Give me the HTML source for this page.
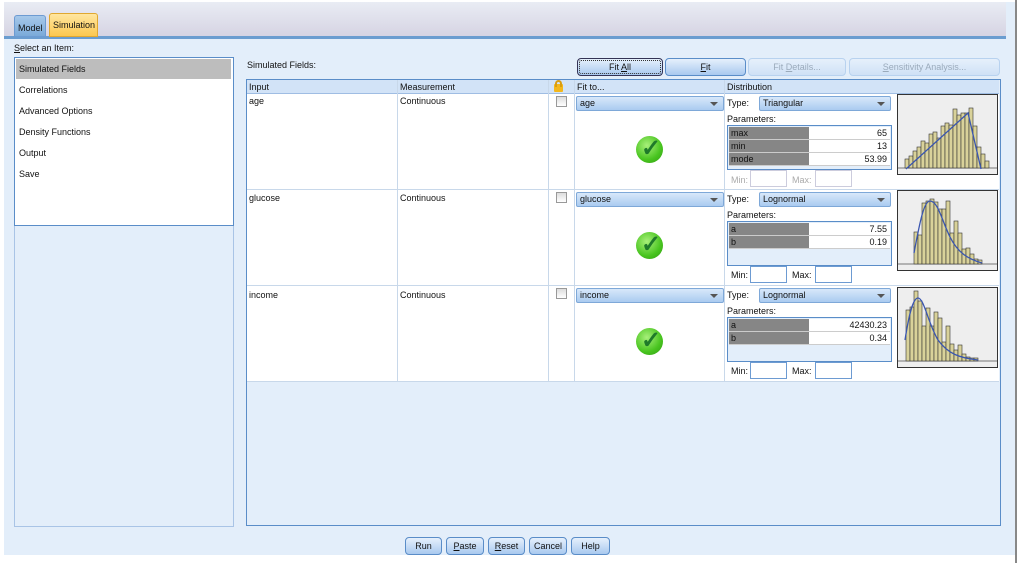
<!DOCTYPE html>
<html><head><meta charset="utf-8"><style>
*{box-sizing:border-box;margin:0;padding:0}
body{width:1023px;height:563px;background:#fff;position:relative;overflow:hidden;font-family:"Liberation Sans",sans-serif;font-size:9px;color:#111}
.a{position:absolute}
.t{position:absolute;white-space:nowrap;font-size:9px;line-height:11px}
.cb{position:absolute;width:148px;height:15px;border:1px solid #7ea8d8;border-radius:2px;background:linear-gradient(#d8e8fa,#aacbf0);font-size:9px;line-height:13px;padding-left:3px}
.cb:after{content:"";position:absolute;right:5px;top:5px;border:4px solid transparent;border-top:4px solid #555;border-bottom:0}
.btn{position:absolute;height:18px;border:1px solid #5a8dc8;border-radius:4px;background:linear-gradient(#e6f0fc,#a9c9ef);text-align:center;font-size:9px;line-height:16px}
.dis{border-color:#b8d2ef;background:linear-gradient(#e6f0fb,#cfe1f6);color:#9aaabb}
.chk{position:absolute;width:11px;height:11px;border:1px solid #999;background:linear-gradient(#ddd,#fff)}
.ok{position:absolute;width:27px;height:27px;border-radius:50%;background:radial-gradient(circle at 40% 35%,#a8f07a,#48c41f 60%,#2f9a12);}
.ok:after{content:"✓";position:absolute;left:5px;top:-2px;font-size:24px;color:#1f7a2a;font-weight:bold;line-height:30px}
.pb{position:absolute;width:165px;height:45px;border:1px solid #5a8dc8;background:#e3eefa}
.pr{position:absolute;left:1px;width:161px;height:13px;background:#fff;border-bottom:1px solid #ccc}
.pr b{position:absolute;left:0;top:0;width:80px;height:12px;background:#868686;font-weight:normal;padding-left:2px;line-height:12px;font-size:9px}
.pr i{position:absolute;right:3px;top:0;font-style:normal;line-height:12px}
.in{position:absolute;width:37px;height:17px;border:1px solid #6d9bd2;background:#fff}
.hist{position:absolute;width:101px;height:81px;border:1px solid #333;background:#eee}
</style></head><body>
<div class="a" style="left:4px;top:2px;width:1012px;height:553px;background:#e3eefa"></div>
<div class="a" style="left:4px;top:2px;width:1002px;height:34px;background:linear-gradient(#e9ecf4,#d6d4e3)"></div>
<div class="a" style="left:1015px;top:0;width:2px;height:563px;background:#888"></div>
<div class="a" style="left:4px;top:36px;width:1002px;height:3px;background:#6b9dd0"></div>
<div class="a" style="left:14px;top:15px;width:32px;height:22px;background:linear-gradient(#a6c8ea,#7aaad9);border:1px solid #6d9bd2;border-radius:3px 3px 0 0"></div>
<div class="t" style="left:18px;top:23px">Model</div>
<div class="a" style="left:49px;top:13px;width:49px;height:24px;background:linear-gradient(#ffe6a0,#fcc850);border:1px solid #e0a830;border-radius:3px 3px 0 0"></div>
<div class="t" style="left:53px;top:20px">Simulation</div>
<div class="t" style="left:14px;top:43px"><u>S</u>elect an Item:</div>
<div class="a" style="left:14px;top:57px;width:220px;height:470px;border:1px solid #a9c4e6"></div>
<div class="a" style="left:14px;top:57px;width:220px;height:169px;background:#fff;border:1px solid #5a8dc8"></div>
<div class="a" style="left:16px;top:59px;width:215px;height:20px;background:#bdbdbd"></div>
<div class="t" style="left:19px;top:64px">Simulated Fields</div>
<div class="t" style="left:19px;top:85px">Correlations</div>
<div class="t" style="left:19px;top:106px">Advanced Options</div>
<div class="t" style="left:19px;top:127px">Density Functions</div>
<div class="t" style="left:19px;top:148px">Output</div>
<div class="t" style="left:19px;top:169px">Save</div>

<div class="t" style="left:247px;top:60px">Simulated Fields:</div>
<div class="btn" style="left:577px;top:58px;width:86px;border-color:#335;outline:1px dotted #333;outline-offset:-3px">Fit <u>A</u>ll</div>
<div class="btn" style="left:665px;top:58px;width:81px"><u>F</u>it</div>
<div class="btn dis" style="left:748px;top:58px;width:98px">Fit <u>D</u>etails...</div>
<div class="btn dis" style="left:849px;top:58px;width:151px"><u>S</u>ensitivity Analysis...</div>

<div class="a" style="left:246px;top:79px;width:755px;height:447px;border:1px solid #5a8dc8;background:#e3eefa"></div>
<div class="a" style="left:247px;top:80px;width:752px;height:14px;background:#d2e3f7;border-bottom:1px solid #9fbde3"></div>
<div class="a" style="left:247px;top:94px;width:752px;height:288px;background:#fff"></div>
<div class="a" style="left:247px;top:189px;width:752px;height:1px;background:#c8d8ea"></div>
<div class="a" style="left:247px;top:285px;width:752px;height:1px;background:#c8d8ea"></div>
<div class="a" style="left:247px;top:381px;width:752px;height:1px;background:#c8d8ea"></div>
<div class="a" style="left:397px;top:80px;width:1px;height:302px;background:#c8d8ea"></div>
<div class="a" style="left:548px;top:80px;width:1px;height:302px;background:#c8d8ea"></div>
<div class="a" style="left:574px;top:80px;width:1px;height:302px;background:#c8d8ea"></div>
<div class="a" style="left:724px;top:80px;width:1px;height:302px;background:#c8d8ea"></div>
<div class="t" style="left:249px;top:82px">Input</div>
<div class="t" style="left:400px;top:82px">Measurement</div>
<div class="a" style="left:554px;top:84px;width:9px;height:8px;background:#f3b71c;border-radius:1px"></div>
<div class="a" style="left:555px;top:80px;width:7px;height:7px;border:2px solid #d99d10;border-bottom:0;border-radius:4px 4px 0 0"></div>
<div class="t" style="left:577px;top:82px">Fit to...</div>
<div class="t" style="left:727px;top:82px">Distribution</div>

<!-- row 1 -->
<div class="t" style="left:249px;top:96px">age</div>
<div class="t" style="left:400px;top:96px">Continuous</div>
<div class="chk" style="left:556px;top:96px"></div>
<div class="cb" style="left:576px;top:96px">age</div>
<div class="ok" style="left:636px;top:136px"></div>
<div class="t" style="left:727px;top:98px">Type:</div>
<div class="cb" style="left:759px;top:96px;width:132px">Triangular</div>
<div class="t" style="left:727px;top:114px">Parameters:</div>
<div class="pb" style="left:727px;top:125px">
<div class="pr" style="top:1px"><b>max</b><i>65</i></div>
<div class="pr" style="top:14px"><b>min</b><i>13</i></div>
<div class="pr" style="top:27px"><b>mode</b><i>53.99</i></div>
</div>
<div class="t" style="left:731px;top:175px;color:#aaa">Min:</div>
<div class="in" style="left:750px;top:170px;border-color:#ccd"></div>
<div class="t" style="left:792px;top:175px;color:#aaa">Max:</div>
<div class="in" style="left:815px;top:170px;border-color:#ccd"></div>
<div class="hist" style="left:897px;top:94px"><svg width="99" height="79" viewBox="0 0 99 79">
<line x1="0" y1="73" x2="99" y2="73" stroke="#777"/>
<g fill="#d9d29a" stroke="#333" stroke-width=".6">
<rect x="7" y="64" width="4" height="9"/><rect x="11" y="61" width="4" height="12"/><rect x="15" y="56" width="4" height="17"/><rect x="19" y="52" width="4" height="21"/><rect x="23" y="46" width="4" height="27"/><rect x="27" y="48" width="4" height="25"/><rect x="31" y="39" width="4" height="34"/><rect x="35" y="37" width="4" height="36"/><rect x="39" y="43" width="4" height="30"/><rect x="43" y="31" width="4" height="42"/><rect x="47" y="28" width="4" height="45"/><rect x="51" y="30" width="4" height="43"/><rect x="55" y="14" width="4" height="59"/><rect x="59" y="20" width="4" height="53"/><rect x="63" y="18" width="4" height="55"/><rect x="67" y="18" width="4" height="55"/><rect x="71" y="13" width="4" height="60"/><rect x="75" y="31" width="4" height="42"/><rect x="79" y="52" width="4" height="21"/><rect x="83" y="59" width="4" height="14"/><rect x="87" y="66" width="4" height="7"/></g>
<polyline points="8,74 70,18 83,74" fill="none" stroke="#3a56b0" stroke-width="1.3"/></svg></div>

<!-- row 2 -->
<div class="t" style="left:249px;top:193px">glucose</div>
<div class="t" style="left:400px;top:193px">Continuous</div>
<div class="chk" style="left:556px;top:192px"></div>
<div class="cb" style="left:576px;top:192px">glucose</div>
<div class="ok" style="left:636px;top:232px"></div>
<div class="t" style="left:727px;top:194px">Type:</div>
<div class="cb" style="left:759px;top:192px;width:132px">Lognormal</div>
<div class="t" style="left:727px;top:210px">Parameters:</div>
<div class="pb" style="left:727px;top:221px">
<div class="pr" style="top:1px"><b>a</b><i>7.55</i></div>
<div class="pr" style="top:14px"><b>b</b><i>0.19</i></div>
</div>
<div class="t" style="left:731px;top:270px">Min:</div>
<div class="in" style="left:750px;top:266px"></div>
<div class="t" style="left:792px;top:270px">Max:</div>
<div class="in" style="left:815px;top:266px"></div>
<div class="hist" style="left:897px;top:190px"><svg width="99" height="79" viewBox="0 0 99 79">
<line x1="0" y1="73" x2="99" y2="73" stroke="#777"/>
<g fill="#d9d29a" stroke="#333" stroke-width=".6">
<rect x="16" y="41" width="4" height="32"/><rect x="20" y="44" width="4" height="29"/><rect x="24" y="12" width="4" height="61"/><rect x="28" y="10" width="4" height="63"/><rect x="32" y="8" width="4" height="65"/><rect x="36" y="11" width="4" height="62"/><rect x="40" y="18" width="4" height="55"/><rect x="44" y="18" width="4" height="55"/><rect x="48" y="10" width="4" height="63"/><rect x="52" y="42" width="4" height="31"/><rect x="56" y="30" width="4" height="43"/><rect x="60" y="42" width="4" height="31"/><rect x="64" y="58" width="4" height="15"/><rect x="68" y="57" width="4" height="16"/><rect x="72" y="63" width="4" height="10"/><rect x="76" y="68" width="4" height="5"/><rect x="80" y="69" width="4" height="4"/></g>
<path d="M16,62 C22,30 26,10 32,10 C40,10 44,30 52,46 C60,62 70,68 84,72" fill="none" stroke="#3a56b0" stroke-width="1.3"/></svg></div>

<!-- row 3 -->
<div class="t" style="left:249px;top:290px">income</div>
<div class="t" style="left:400px;top:290px">Continuous</div>
<div class="chk" style="left:556px;top:288px"></div>
<div class="cb" style="left:576px;top:288px">income</div>
<div class="ok" style="left:636px;top:328px"></div>
<div class="t" style="left:727px;top:290px">Type:</div>
<div class="cb" style="left:759px;top:288px;width:132px">Lognormal</div>
<div class="t" style="left:727px;top:306px">Parameters:</div>
<div class="pb" style="left:727px;top:317px">
<div class="pr" style="top:1px"><b>a</b><i>42430.23</i></div>
<div class="pr" style="top:14px"><b>b</b><i>0.34</i></div>
</div>
<div class="t" style="left:731px;top:366px">Min:</div>
<div class="in" style="left:750px;top:362px"></div>
<div class="t" style="left:792px;top:366px">Max:</div>
<div class="in" style="left:815px;top:362px"></div>
<div class="hist" style="left:897px;top:287px"><svg width="99" height="79" viewBox="0 0 99 79">
<line x1="0" y1="73" x2="99" y2="73" stroke="#777"/>
<g fill="#d9d29a" stroke="#333" stroke-width=".6">
<rect x="8" y="22" width="4" height="51"/><rect x="12" y="19" width="4" height="54"/><rect x="16" y="3" width="4" height="70"/><rect x="20" y="13" width="4" height="60"/><rect x="24" y="38" width="4" height="35"/><rect x="28" y="20" width="4" height="53"/><rect x="32" y="38" width="4" height="35"/><rect x="36" y="24" width="4" height="49"/><rect x="40" y="30" width="4" height="43"/><rect x="44" y="54" width="4" height="19"/><rect x="48" y="38" width="4" height="35"/><rect x="52" y="56" width="4" height="17"/><rect x="56" y="62" width="4" height="11"/><rect x="60" y="57" width="4" height="16"/><rect x="64" y="66" width="4" height="7"/><rect x="68" y="69" width="4" height="4"/><rect x="72" y="70" width="4" height="3"/><rect x="76" y="70" width="4" height="3"/></g>
<path d="M7,52 C12,20 16,10 20,10 C26,10 30,35 40,52 C50,66 62,70 80,72" fill="none" stroke="#3a56b0" stroke-width="1.3"/></svg></div>

<div class="btn" style="left:405px;top:537px;width:37px">Run</div>
<div class="btn" style="left:446px;top:537px;width:38px"><u>P</u>aste</div>
<div class="btn" style="left:488px;top:537px;width:37px"><u>R</u>eset</div>
<div class="btn" style="left:529px;top:537px;width:38px">Cancel</div>
<div class="btn" style="left:571px;top:537px;width:39px">Help</div>
</body></html>
